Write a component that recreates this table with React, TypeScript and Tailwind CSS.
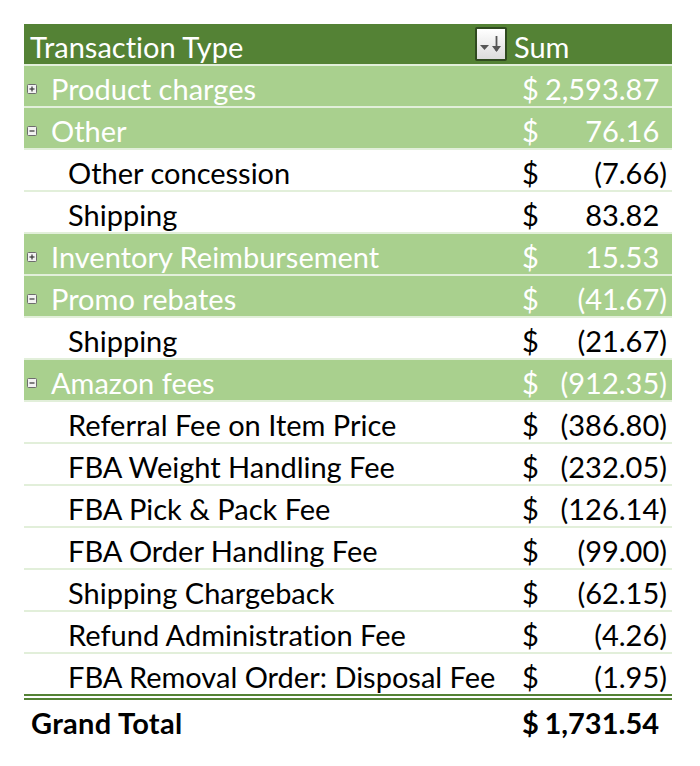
import React from "react";

type Row = {
  kind: "group" | "child";
  icon?: "+" | "-";
  label: string;
  value: string;
  neg: boolean;
};

const rows: Row[] = [
  { kind: "group", icon: "+", label: "Product charges", value: "2,593.87", neg: false },
  { kind: "group", icon: "-", label: "Other", value: "76.16", neg: false },
  { kind: "child", label: "Other concession", value: "7.66", neg: true },
  { kind: "child", label: "Shipping", value: "83.82", neg: false },
  { kind: "group", icon: "+", label: "Inventory Reimbursement", value: "15.53", neg: false },
  { kind: "group", icon: "-", label: "Promo rebates", value: "41.67", neg: true },
  { kind: "child", label: "Shipping", value: "21.67", neg: true },
  { kind: "group", icon: "-", label: "Amazon fees", value: "912.35", neg: true },
  { kind: "child", label: "Referral Fee on Item Price", value: "386.80", neg: true },
  { kind: "child", label: "FBA Weight Handling Fee", value: "232.05", neg: true },
  { kind: "child", label: "FBA Pick & Pack Fee", value: "126.14", neg: true },
  { kind: "child", label: "FBA Order Handling Fee", value: "99.00", neg: true },
  { kind: "child", label: "Shipping Chargeback", value: "62.15", neg: true },
  { kind: "child", label: "Refund Administration Fee", value: "4.26", neg: true },
  { kind: "child", label: "FBA Removal Order: Disposal Fee", value: "1.95", neg: true },
];

function ExpandIcon({ sign }: { sign: "+" | "-" }) {
  return (
    <svg width="10" height="10" viewBox="0 0 10 10" className="shrink-0">
      <rect x="0.5" y="0.5" width="9" height="9" rx="1" fill="#f2f2f2" stroke="#6d6d6d" />
      <line x1="2.5" y1="5" x2="7.5" y2="5" stroke="#333" strokeWidth="1.2" />
      {sign === "+" && <line x1="5" y1="2.5" x2="5" y2="7.5" stroke="#333" strokeWidth="1.2" />}
    </svg>
  );
}

function FilterButton() {
  return (
    <div className="w-[32px] h-[34px] shrink-0 rounded-[2px] border-2 border-[#2f4a1f] bg-gradient-to-b from-[#ffffff] to-[#dcdcdc] flex items-center justify-center">
      <svg width="26" height="24" viewBox="0 0 26 24">
        <polygon points="2,13 11,13 6.5,18" fill="#555" />
        <line x1="18.5" y1="4" x2="18.5" y2="19" stroke="#555" strokeWidth="1.8" />
        <polygon points="14,14 23,14 18.5,20" fill="#555" />
      </svg>
    </div>
  );
}

export default function App() {
  return (
    <div
      className="w-[700px] h-[766px] bg-white pt-[24px] pl-[24px] [font-variant-ligatures:none]"
      style={{ fontFamily: "Lato, 'Open Sans', sans-serif" }}
    >
      <div className="w-[648px] text-[29px] leading-none">
        <div className="flex h-[42px] bg-[#548235] text-white border-b-2 border-[#e2efda]">
          <div className="w-[486px] flex items-center justify-between pl-[6px] pr-[3px]">
            <span className="pt-[5px]">Transaction Type</span>
            <FilterButton />
          </div>
          <div className="flex-1 flex items-center pl-[4px] pt-[5px]">Sum</div>
        </div>
        {rows.map((r, i) => {
          const group = r.kind === "group";
          return (
            <div
              key={i}
              className={
                "flex h-[42px] border-b-2 border-[#e2efda] pt-[5px] " +
                (group ? "bg-[#a9d08e] text-white" : "bg-white text-black")
              }
            >
              <div className={"w-[486px] flex items-center " + (group ? "pl-[3px] gap-[14px]" : "pl-[44px]")}>
                {group && r.icon && <ExpandIcon sign={r.icon} />}
                <span className="whitespace-nowrap">{r.label}</span>
              </div>
              <div className="flex-1 flex items-center pl-[12px] pr-[5px]">
                <span>$</span>
                <span className="flex-1 text-right">
                  {r.neg ? "(" : ""}
                  {r.value}
                  <span className={r.neg ? "" : "invisible"}>)</span>
                </span>
              </div>
            </div>
          );
        })}
        <div className="h-[2px] bg-[#548235] -mt-[2px]" />
        <div className="h-[2px] bg-white" />
        <div className="h-[2px] bg-[#548235]" />
        <div className="flex h-[40px] font-bold text-black pt-[4px]">
          <div className="w-[486px] flex items-center pl-[7px] tracking-[0.3px]">Grand Total</div>
          <div className="flex-1 flex items-center pl-[12px] pr-[5px]">
            <span>$</span>
            <span className="flex-1 text-right">
              1,731.54<span className="invisible">)</span>
            </span>
          </div>
        </div>
      </div>
    </div>
  );
}
